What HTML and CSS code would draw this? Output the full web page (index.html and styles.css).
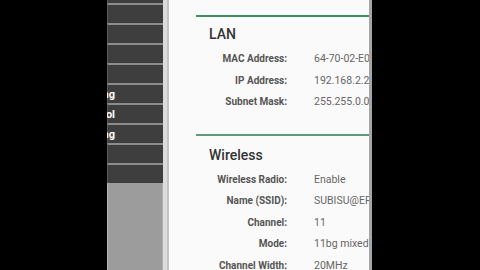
FILE: index.html
```html
<!DOCTYPE html>
<html lang="en">
<head>
  <meta charset="UTF-8">
  <title>Status</title>
  <link rel="stylesheet" href="styles.css">
</head>
<body>
  <div class="screen">
    <div class="edge"></div>

    <nav class="menu">
      <div class="item cut"></div>
      <div class="item"></div>
      <div class="item"></div>
      <div class="item"></div>
      <div class="item"></div>
      <div class="item"><span>Advanced Routing</span></div>
      <div class="item"><span>Bandwidth Control</span></div>
      <div class="item"><span>IP &amp; MAC Binding</span></div>
      <div class="item"></div>
      <div class="item"></div>
      <div class="menu-rest"></div>
    </nav>

    <div class="divider"></div>

    <main class="content">
      <section class="panel first">
        <h3>LAN</h3>
        <div class="row"><span class="key">MAC Address:</span><span class="val">64-70-02-E0-5A-1C</span></div>
        <div class="row"><span class="key">IP Address:</span><span class="val">192.168.2.254</span></div>
        <div class="row"><span class="key">Subnet Mask:</span><span class="val">255.255.0.0</span></div>
      </section>

      <section class="panel">
        <h3>Wireless</h3>
        <div class="row"><span class="key">Wireless Radio:</span><span class="val">Enable</span></div>
        <div class="row"><span class="key">Name (SSID):</span><span class="val">SUBISU@EPIC</span></div>
        <div class="row"><span class="key">Channel:</span><span class="val">11</span></div>
        <div class="row"><span class="key">Mode:</span><span class="val">11bg mixed</span></div>
        <div class="row"><span class="key">Channel Width:</span><span class="val">20MHz</span></div>
      </section>
    </main>

    <div class="scrollbar"></div>
  </div>
</body>
</html>
```

FILE: styles.css
```css
html, body { margin: 0; height: 100%; background: #000; }
body { font-family: Roboto, "Liberation Sans", Arial, sans-serif; overflow: hidden; }

.screen { display: flex; width: 480px; height: 270px; }
.edge { width: 107px; flex: none; background: #000; }

.menu { width: 56px; flex: none; display: flex; flex-direction: column; overflow: hidden; background: #9c9c9c; }
.item { height: 18px; flex: none; display: flex; justify-content: flex-end; align-items: center; padding-right: 48px; background: #3e3e3e; border-top: 2px solid #8c8c8c; border-left: 1px solid #5a5a5a; color: #fff; font-size: 11px; font-weight: bold; white-space: nowrap; }
.item.cut { height: 3px; border-top: none; }
.menu-rest { flex: 1; border-left: 1px solid #b8b8b8; border-right: 1px solid #b0b0b0; }

.divider { width: 4px; flex: none; background: #dcdcdc; border-right: 2px solid #c4c4c4; }

.content { width: 200px; flex: none; background: #fafafa; overflow: hidden; }
.panel { margin-left: 27px; border-top: 2px solid #5f9a7f; padding: 9px 0 21px 13px; }
.panel.first { margin-top: 15px; border-top-color: #3f8f63; padding-top: 7px; }
.panel h3 { margin: 0 0 4px; height: 20px; line-height: 20px; font-size: 14px; font-weight: 500; color: #333; }

.row { display: flex; height: 21.5px; align-items: center; white-space: nowrap; }
.key { width: 78px; flex: none; text-align: right; font-size: 10px; font-weight: bold; color: #555; }
.val { margin-left: 27px; font-size: 10.5px; color: #666; }

.scrollbar { width: 3px; flex: none; background: #a6a6a6; }
```
